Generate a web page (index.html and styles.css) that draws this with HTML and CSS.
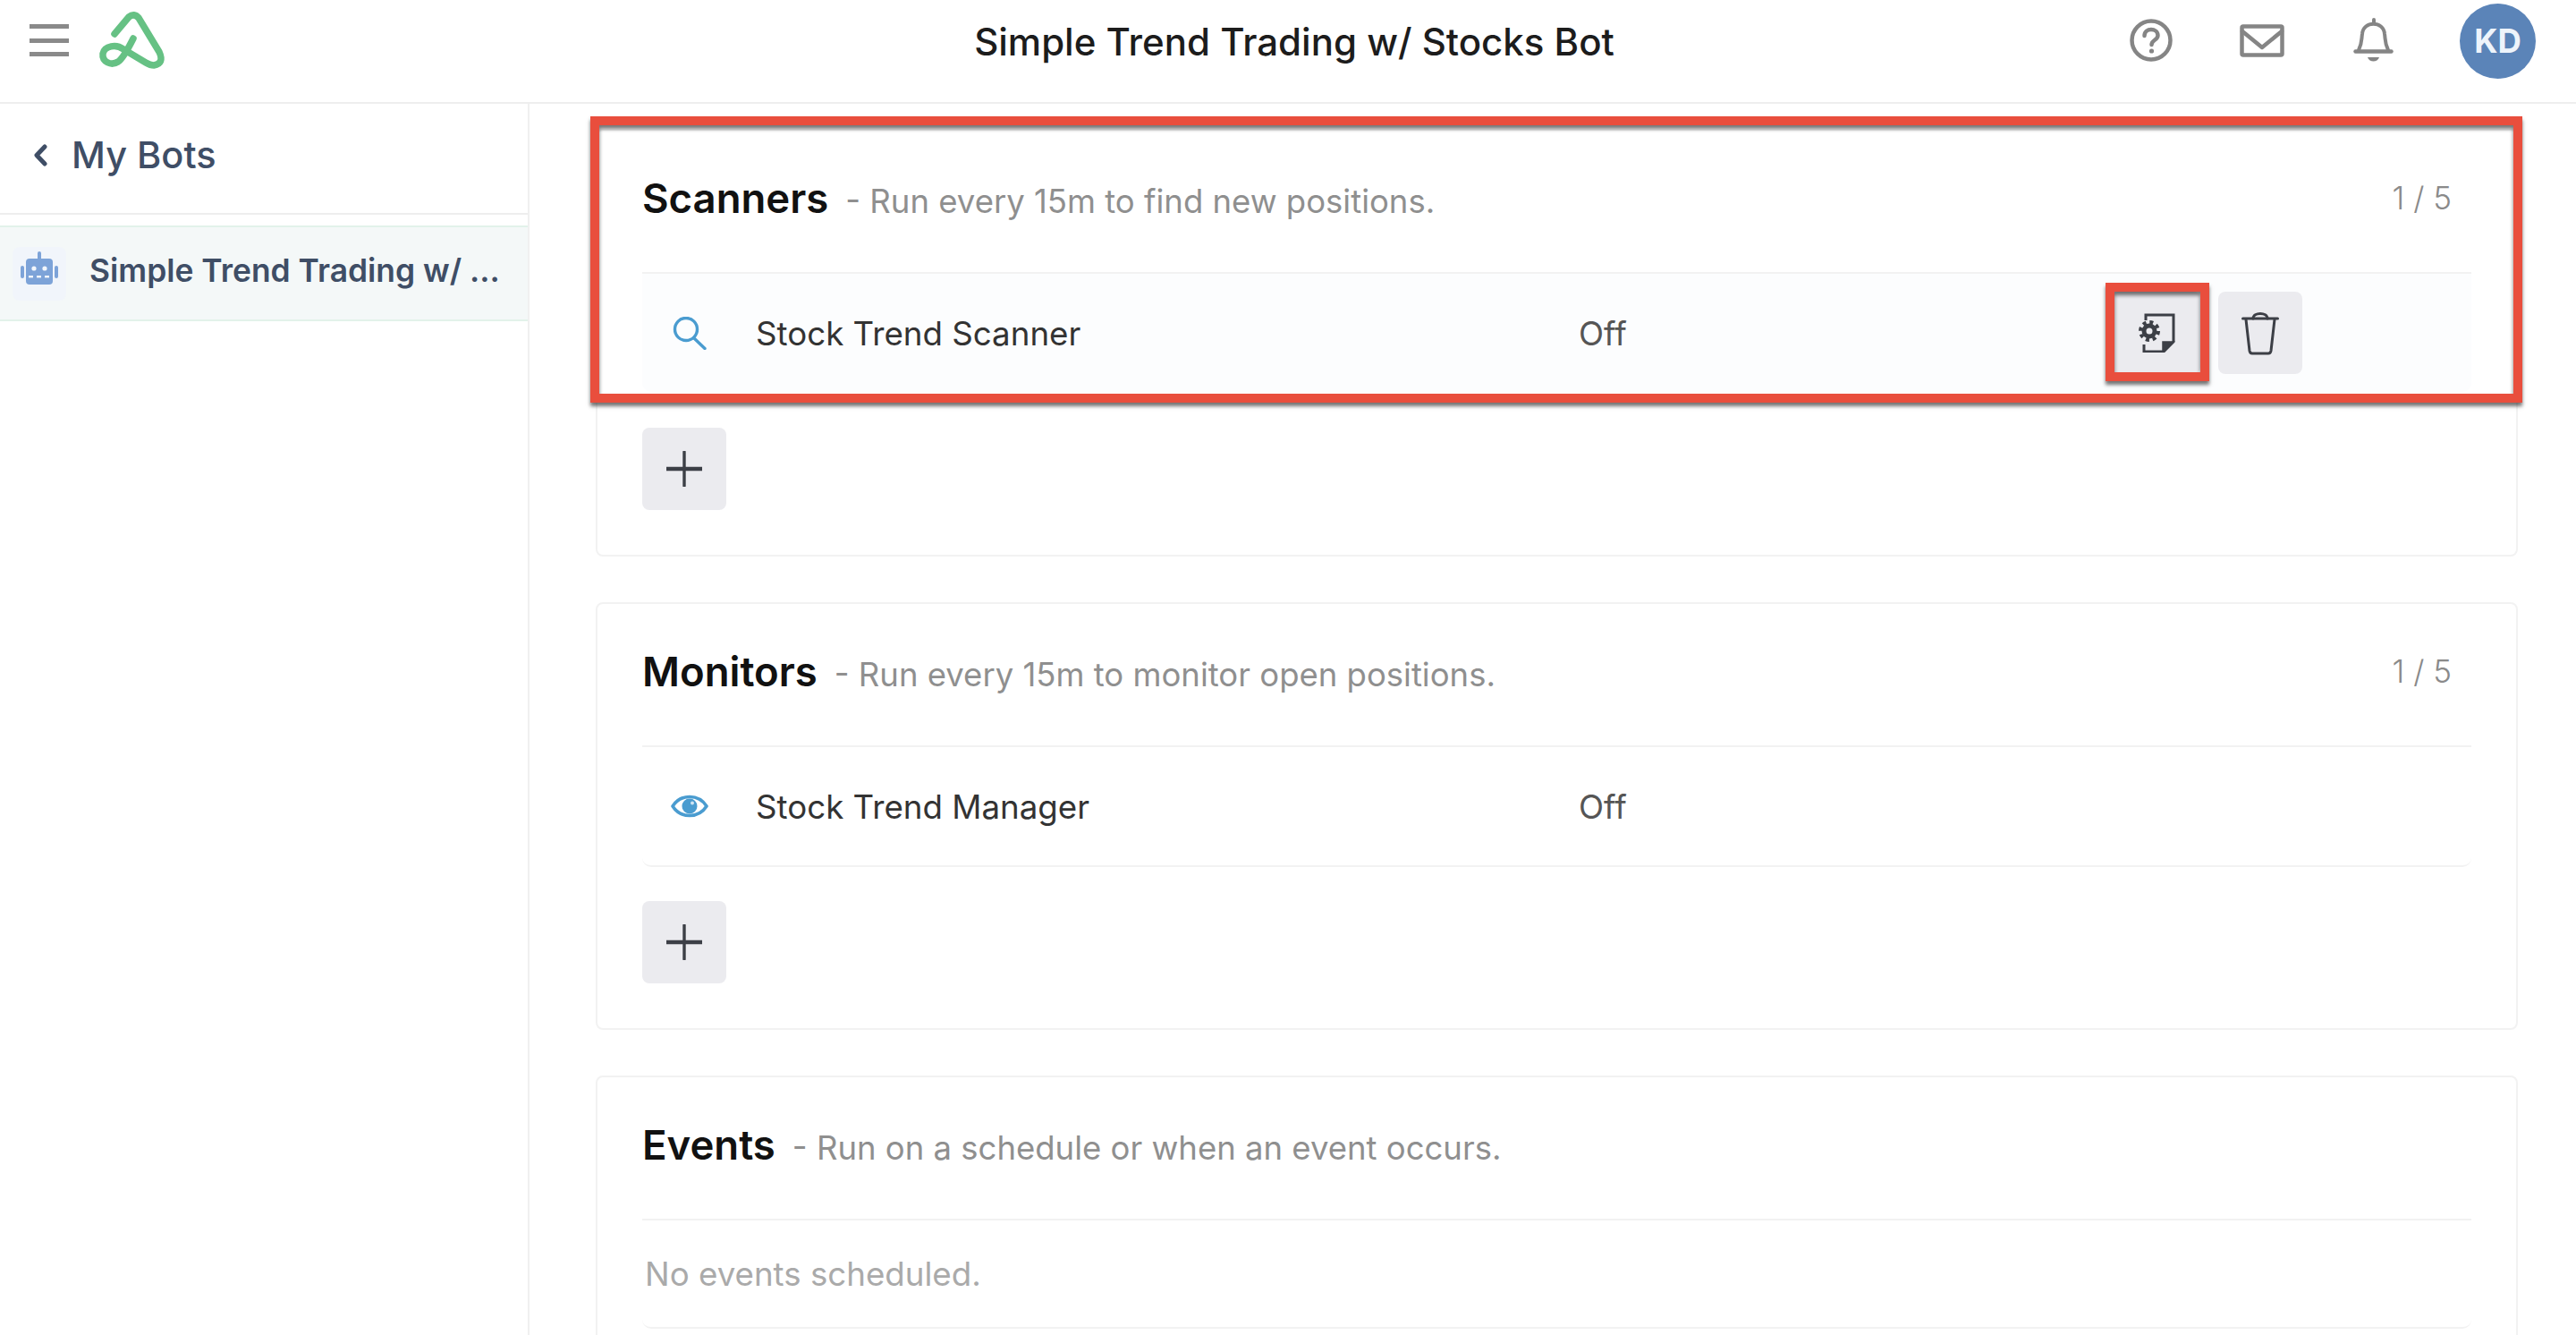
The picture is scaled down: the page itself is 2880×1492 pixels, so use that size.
FILE: index.html
```html
<!DOCTYPE html>
<html lang="en">

<head>
    <meta charset="UTF-8">
    <title>Simple Trend Trading w/ Stocks Bot</title>
    <link rel="stylesheet" href="styles.css">
</head>

<body>
    <!-- Top bar -->
    <header class="topbar">
        <div class="topbar-left">
            <div class="hamburger"><span></span><span></span><span></span></div>
            <svg class="logo" viewBox="0 0 90 80" fill="none" stroke="#66c184" stroke-width="7.5" stroke-linecap="round" stroke-linejoin="round">
                <path d="M28 33 L44 14 Q50 9 55 15 L78 53 Q84 66 72 68 Q68 68 63 65 L38 50 C30 44 17 46 15 55 C14 64 24 69 32 64 C38 60 44 48 49 38" />
            </svg>
        </div>
        <h1 class="page-title">Simple Trend Trading w/ Stocks Bot</h1>
        <div class="topbar-right">
            <svg class="icon-help" viewBox="0 0 48 48" fill="none" stroke="#858585" stroke-width="4.5" stroke-linecap="round">
                <ellipse cx="24" cy="24" rx="21.5" ry="21.5" />
                <path d="M16.5 19 C16.5 9.5 31.5 10 31.5 18.5 C31.5 24 24.5 23.5 24.5 29" />
                <circle cx="24.5" cy="36" r="2.6" fill="#858585" stroke="none" />
            </svg>
            <svg class="icon-mail" viewBox="0 0 50 37" fill="none" stroke="#858585" stroke-width="4.5" stroke-linejoin="round" stroke-linecap="round">
                <rect x="2.5" y="2.5" width="45" height="32" rx="1.5" />
                <path d="M3 8 L25 26 L47 8" />
            </svg>
            <svg class="icon-bell" viewBox="0 0 45 50" fill="none" stroke="#858585" stroke-width="4" stroke-linecap="round" stroke-linejoin="round">
                <path d="M23 2 V6" />
                <path d="M6 36 C10 28 9 24 10 18 C11 3 34 3 35 18 C36 24 35 28 39 36" />
                <path d="M2.5 37.5 H42.5" stroke-width="4.5" />
                <path d="M16 44 H29 C27 50 18 50 16 44 Z" fill="#858585" stroke="none" />
            </svg>
            <div class="avatar">KD</div>
        </div>
    </header>

    <div class="layout">
        <!-- Sidebar -->
        <aside class="sidebar">
            <div class="back-row">
                <svg class="chevron" viewBox="0 0 16 25" fill="none" stroke="#3f4e66" stroke-width="5" stroke-linecap="round" stroke-linejoin="round">
                    <path d="M13 3 L4 12.5 L13 22" />
                </svg>
                <span>My Bots</span>
            </div>
            <div class="bot-row">
                <div class="bot-icon">
                    <svg viewBox="0 0 60 60" width="60" height="60">
                        <rect x="9" y="21" width="4" height="14" rx="2" fill="#7da3d8" />
                        <rect x="47" y="21" width="4" height="14" rx="2" fill="#7da3d8" />
                        <rect x="28" y="5" width="4" height="10" rx="2" fill="#7da3d8" />
                        <rect x="15" y="13" width="30" height="29" rx="4" fill="#7da3d8" />
                        <circle cx="24" cy="24" r="2.6" fill="#f2f6fb" />
                        <circle cx="36" cy="24" r="2.6" fill="#f2f6fb" />
                        <rect x="18" y="32" width="5" height="2.4" fill="#f2f6fb" />
                        <rect x="27" y="32" width="5" height="2.4" fill="#f2f6fb" />
                        <rect x="36" y="32" width="5" height="2.4" fill="#f2f6fb" />
                    </svg>
                </div>
                <span class="bot-name">Simple Trend Trading w/ ...</span>
            </div>
        </aside>

        <!-- Main content -->
        <main class="content">
            <section class="card">
                <div class="card-head">
                    <div class="card-title">
                        <h2>Scanners</h2>
                        <span class="card-sub">- Run every 15m to find new positions.</span>
                    </div>
                    <span class="card-count">1 / 5</span>
                </div>
                <div class="row row-active">
                    <div class="row-icon">
                        <svg class="icon-search" viewBox="0 0 38 37" fill="none" stroke="#4a9cd0" stroke-width="3.4" stroke-linecap="round">
                            <circle cx="15" cy="14" r="12.5" />
                            <path d="M24 24 L36 35.5" />
                        </svg>
                    </div>
                    <div class="row-name">Stock Trend Scanner</div>
                    <div class="row-status">Off</div>
                    <div class="row-actions">
                        <button class="icon-btn gear-btn">
                            <svg class="icon-gear" viewBox="0 0 44 44" fill="none" stroke="#3c3f46">
                                <path d="M8 8 V2 H39 V32 L28 43 H6 V35" stroke-width="3" />
                                <path d="M27 43 V32 H39 Z" fill="#3c3f46" stroke="#3c3f46" stroke-width="1.5" />
                                <circle cx="12" cy="20" r="6" stroke-width="5" />
                                <circle cx="12" cy="20" r="10" stroke-width="4" stroke-dasharray="4 3.85" />
                            </svg>
                            <span class="mark mark-small"></span>
                        </button>
                        <button class="icon-btn">
                            <svg class="icon-trash" viewBox="0 0 42 49" fill="none" stroke="#3c3f46" stroke-width="3" stroke-linecap="round" stroke-linejoin="round">
                                <path d="M1.5 8 H40.5" />
                                <path d="M13 8 C13 0.5 29 0.5 29 8" />
                                <path d="M5 9 L9 44 Q9.5 47 12 47 H30 Q32.5 47 33 44 L37 9" />
                            </svg>
                        </button>
                    </div>
                </div>
                <button class="icon-btn add-btn">
                    <svg class="icon-plus" viewBox="0 0 40 40" stroke="#3c3f46" stroke-linecap="round">
                        <path d="M20 1 V39" stroke-width="3.4" />
                        <path d="M1 20 H39" stroke-width="4.6" />
                    </svg>
                </button>
                <!-- annotation frame -->
                <div class="mark mark-large"></div>
            </section>

            <section class="card">
                <div class="card-head">
                    <div class="card-title">
                        <h2>Monitors</h2>
                        <span class="card-sub">- Run every 15m to monitor open positions.</span>
                    </div>
                    <span class="card-count">1 / 5</span>
                </div>
                <div class="row">
                    <div class="row-icon">
                        <svg class="icon-eye" viewBox="0 0 42 30" fill="none">
                            <path d="M2 15 C11 1 31 1 40 15 C31 29 11 29 2 15 Z" stroke="#4a9cd0" stroke-width="3.6" stroke-linejoin="round" />
                            <circle cx="21" cy="15" r="8.5" fill="#4a9cd0" />
                            <circle cx="24" cy="11.5" r="2" fill="#cfe4f3" />
                        </svg>
                    </div>
                    <div class="row-name">Stock Trend Manager</div>
                    <div class="row-status">Off</div>
                </div>
                <button class="icon-btn add-btn">
                    <svg class="icon-plus" viewBox="0 0 40 40" stroke="#3c3f46" stroke-linecap="round">
                        <path d="M20 1 V39" stroke-width="3.4" />
                        <path d="M1 20 H39" stroke-width="4.6" />
                    </svg>
                </button>
            </section>

            <section class="card">
                <div class="card-head">
                    <div class="card-title">
                        <h2>Events</h2>
                        <span class="card-sub">- Run on a schedule or when an event occurs.</span>
                    </div>
                </div>
                <div class="row row-empty">No events scheduled.</div>
            </section>
        </main>
    </div>
</body>

</html>
```

FILE: styles.css
```css
/* page */
* {
    box-sizing: border-box;
}

html,
body {
    margin: 0;
    height: 100%;
}

body {
    font-family: "Inter", "Liberation Sans", sans-serif;
    background-color: #fff;
    color: #333;
    overflow: hidden;
}

/* top bar */
.topbar {
    height: 116px;
    padding: 0 45px 24px 33px;
    display: flex;
    align-items: center;
    border-bottom: 2px solid #eeeeee;
}

.topbar-left {
    width: 480px;
    display: flex;
    align-items: center;
    gap: 37px;
}

.hamburger {
    width: 44px;
    height: 36px;
    display: flex;
    flex-direction: column;
    justify-content: space-between;
}

.hamburger span {
    height: 5px;
    background-color: #8a8a8a;
}

.logo {
    width: 90px;
    height: 80px;
    margin-left: -14px;
}

.page-title {
    flex: 1;
    margin: 2px 0 0;
    text-align: center;
    font-size: 42px;
    font-weight: 500;
    color: #1c1c1c;
}

.topbar-right {
    display: flex;
    align-items: center;
}

.icon-help {
    width: 48px;
    height: 48px;
    margin-right: 75px;
}

.icon-mail {
    width: 50px;
    height: 37px;
    margin-right: 77px;
}

.icon-bell {
    width: 45px;
    height: 50px;
    margin-right: 74px;
}

.avatar {
    width: 85px;
    height: 84px;
    margin-top: 2px;
    border-radius: 50%;
    background-color: #5b84b8;
    color: #eef4fb;
    display: flex;
    align-items: center;
    justify-content: center;
    font-size: 36.5px;
    font-weight: 700;
}

/* layout */
.layout {
    display: flex;
    height: calc(100% - 116px);
}

.sidebar {
    width: 592px;
    flex-shrink: 0;
    border-right: 2px solid #f0f0f0;
}

.back-row {
    height: 124px;
    padding: 0 0 8px 37px;
    display: flex;
    align-items: center;
    gap: 27px;
    border-bottom: 2px solid #eeeeee;
    font-size: 41.5px;
    font-weight: 500;
    color: #3f4e66;
}

.chevron {
    width: 16px;
    height: 25px;
}

.bot-row {
    height: 107px;
    margin-top: 12px;
    padding-left: 14px;
    display: flex;
    align-items: center;
    gap: 26px;
    background-color: #f4f8f8;
    border-top: 2px solid #e2f2ea;
    border-bottom: 2px solid #e2f2ea;
}

.bot-icon {
    width: 60px;
    height: 60px;
    border-radius: 8px;
    background-color: #f1f5fb;
}

.bot-name {
    margin-bottom: 7px;
    font-size: 35.4px;
    font-weight: 600;
    color: #3f4e66;
    white-space: nowrap;
}

.content {
    flex: 1;
    padding: 28px 65px 0 74px;
    display: flex;
    flex-direction: column;
    gap: 51px;
}

/* cards */
.card {
    position: relative;
    flex-shrink: 0;
    padding: 0 50px 50px;
    border: 2px solid #f2f2f2;
    border-radius: 8px;
    background-color: #fff;
}

.card-head {
    height: 158px;
    padding-bottom: 8px;
    display: flex;
    align-items: center;
    justify-content: space-between;
}

.card-title {
    display: flex;
    align-items: baseline;
    gap: 19px;
}

.card-title h2 {
    margin: 0;
    font-size: 45.5px;
    font-weight: 600;
    color: #111;
}

.card-sub {
    font-size: 36.5px;
    color: #8f8f8f;
}

.card-count {
    margin-right: 22px;
    font-size: 35px;
    font-weight: 300;
    color: #8a8a8a;
}

/* rows */
.row {
    height: 136px;
    display: flex;
    align-items: center;
    border-top: 2px solid #f2f2f2;
    border-bottom: 2px solid #f2f2f2;
    border-radius: 0 0 10px 10px;
    font-size: 36.7px;
}

.row-active {
    height: 134px;
    background-color: #fcfdfe;
    border-bottom: none;
}

.row-icon {
    width: 127px;
    padding-right: 21px;
    display: flex;
    justify-content: center;
}

.row-name {
    width: 920px;
    color: #333;
}

.row-status {
    width: 595px;
    color: #555;
}

.row-actions {
    display: flex;
    gap: 20px;
}

.row-empty {
    height: 123px;
    padding-left: 3px;
    color: #aaaaaa;
}

.icon-search {
    width: 38px;
    height: 37px;
}

.icon-eye {
    width: 42px;
    height: 30px;
}

.icon-btn {
    position: relative;
    width: 94px;
    height: 92px;
    padding: 0;
    border: none;
    border-radius: 8px;
    background-color: #ebebef;
    display: flex;
    align-items: center;
    justify-content: center;
}

.gear-btn {
    width: 100px;
}

.icon-gear {
    width: 44px;
    height: 44px;
    margin-left: 6px;
}

.icon-trash {
    width: 42px;
    height: 49px;
}

.icon-plus {
    width: 40px;
    height: 40px;
}

.add-btn {
    margin-top: 38px;
}

.row-active + .add-btn {
    margin-top: 40px;
}

/* red annotation frames */
.mark {
    position: absolute;
    border: 10px solid #e94e3d;
    box-shadow: 0 4px 4px rgba(0, 0, 0, 0.55), inset 0 4px 4px rgba(0, 0, 0, 0.55);
    pointer-events: none;
}

.mark-large {
    top: -16px;
    left: -8px;
    right: -7px;
    height: 320px;
}

.mark-small {
    top: -10px;
    left: -6px;
    right: -10px;
    bottom: -8px;
}
```
